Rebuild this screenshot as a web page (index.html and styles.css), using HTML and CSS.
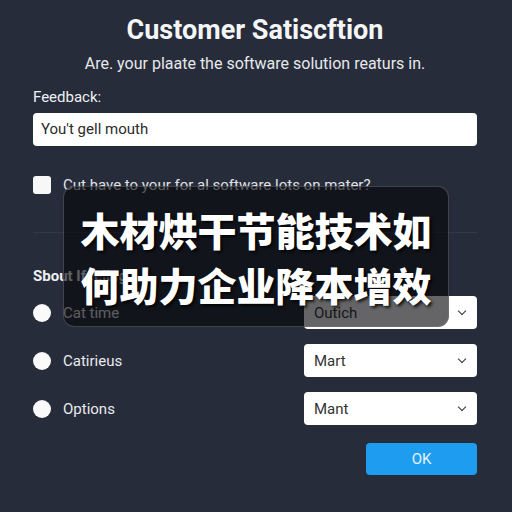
FILE: index.html
```html
<!DOCTYPE html>
<html lang="en">
<head>
  <meta charset="UTF-8">
  <meta name="viewport" content="width=device-width, initial-scale=1.0">
  <title>Customer Satisfaction</title>
  <link rel="stylesheet" href="styles.css">
</head>
<body>

  <!-- Survey form -->
  <main class="survey">
    <h1>Customer Satiscftion</h1>
    <p class="subtitle">Are. your plaate the software solution reaturs in.</p>

    <label class="field-label" for="feedback">Feedback:</label>
    <div class="text-input" id="feedback">You't gell mouth</div>

    <div class="check-row">
      <span class="checkbox"></span>
      <span>Cut have to your for al software lots on mater?</span>
    </div>

    <hr class="divider">

    <h2>Sbout Ifeeling:</h2>

    <div class="option-row">
      <div class="option-label"><span class="radio"></span>Cat time</div>
      <div class="select">Outich <span class="chevron"></span></div>
    </div>
    <div class="option-row">
      <div class="option-label"><span class="radio"></span>Catirieus</div>
      <div class="select">Mart <span class="chevron"></span></div>
    </div>
    <div class="option-row">
      <div class="option-label"><span class="radio"></span>Options</div>
      <div class="select">Mant <span class="chevron"></span></div>
    </div>

    <div class="actions">
      <button class="ok-btn">OK</button>
    </div>
  </main>

  <!-- Caption overlay -->
  <div class="caption">木材烘干节能技术如<br>何助力企业降本增效</div>

</body>
</html>
```

FILE: styles.css
```css
/* Page */
body {
  margin: 0;
  background-color: #272c3a;
  font-family: Roboto, "Liberation Sans", sans-serif;
  color: #eef0f4;
  width: 512px;
  height: 512px;
  overflow: hidden;
  position: relative;
}
.survey {
  padding: 14px 35px 0 33px;
}
h1 {
  margin: 0;
  text-align: center;
  font-size: 27px;
  font-weight: 700;
  line-height: 32px;
  color: #f4f5f7;
}
.subtitle {
  margin: 6px 0 0;
  text-align: center;
  font-size: 16px;
  line-height: 24px;
  color: #e6e8ec;
}
.field-label {
  display: block;
  margin-top: 11px;
  font-size: 15px;
  line-height: 20px;
}
/* Inputs */
.text-input {
  margin-top: 6px;
  height: 33px;
  box-sizing: border-box;
  padding: 0 8px;
  background-color: #fff;
  border-radius: 4px;
  color: #2b2b2b;
  font-size: 15px;
  line-height: 33px;
}
.check-row {
  display: flex;
  align-items: center;
  gap: 12px;
  margin-top: 30px;
  font-size: 15px;
  color: #e0e2e6;
}
.checkbox {
  width: 18px;
  height: 18px;
  border-radius: 3px;
  background-color: #f7f7f7;
}
.divider {
  margin: 38px 0 0;
  border: none;
  border-top: 1px solid #333949;
}
h2 {
  margin: 33px 0 0;
  font-size: 15px;
  font-weight: 700;
  line-height: 20px;
}
.option-row {
  display: flex;
  justify-content: space-between;
  align-items: center;
  margin-top: 10px;
}
.option-row + .option-row {
  margin-top: 15px;
}
.option-label {
  display: flex;
  align-items: center;
  gap: 12px;
  font-size: 15px;
  color: #e8eaee;
}
.radio {
  width: 18px;
  height: 18px;
  border-radius: 50%;
  background-color: #fafafa;
}
.select {
  width: 173px;
  height: 33px;
  box-sizing: border-box;
  padding: 0 10px;
  display: flex;
  justify-content: space-between;
  align-items: center;
  background-color: #fff;
  border-radius: 4px;
  color: #333;
  font-size: 15px;
}
.chevron {
  width: 5px;
  height: 5px;
  border-right: 1.6px solid #333;
  border-bottom: 1.6px solid #333;
  transform: rotate(45deg);
  margin: -4px 2px 0 0;
}
.actions {
  display: flex;
  justify-content: flex-end;
  margin-top: 18px;
}
.ok-btn {
  width: 111px;
  height: 32px;
  border: none;
  border-radius: 4px;
  background-color: #1e9cf0;
  color: #e4f3ff;
  font-family: Roboto, "Liberation Sans", sans-serif;
  font-size: 15px;
}
/* Caption overlay */
.caption {
  position: absolute;
  left: 63px;
  top: 186px;
  width: 386px;
  height: 141px;
  box-sizing: border-box;
  padding-top: 15px;
  border: 1px solid rgba(120, 125, 135, 0.45);
  border-radius: 11px;
  background-color: rgba(6, 7, 10, 0.62);
  text-align: center;
  font-family: "Noto Sans CJK SC", sans-serif;
  font-size: 39px;
  font-weight: 900;
  line-height: 55px;
  color: #fff;
  text-shadow: 2px 2px 3px rgba(0, 0, 0, 0.8);
}
```
